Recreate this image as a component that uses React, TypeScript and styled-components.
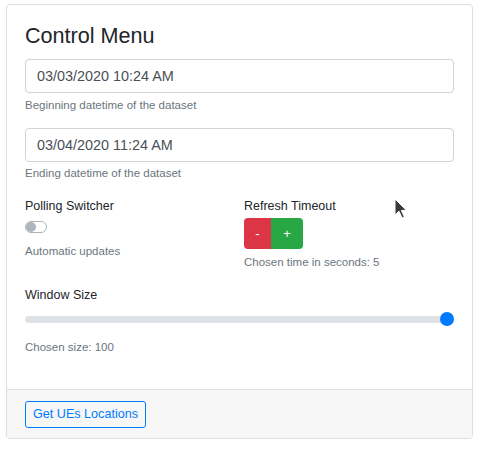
import React from "react";
import styled, { createGlobalStyle } from "styled-components";

const GlobalStyle = createGlobalStyle`
  html, body { margin: 0; padding: 0; background: #fff; }
  body {
    font-family: "Liberation Sans", Arial, sans-serif;
    color: #212529;
  }
  * { box-sizing: border-box; }
`;

const Page = styled.div`
  position: relative;
  width: 480px;
  height: 473px;
  padding: 4px 7px 0 6px;
`;

const Card = styled.div`
  border: 1px solid #dfdfdf;
  border-radius: 4px;
  overflow: hidden;
  background: #fff;
`;

const Body = styled.div`
  padding: 18px 18px 18px 18px;
`;

const Title = styled.h3`
  margin: 0 0 10px;
  font-size: 21.6px;
  font-weight: 400;
  line-height: 1.2;
`;

const Group = styled.div`
  margin-bottom: 14px;
`;

const Input = styled.input`
  display: block;
  width: 100%;
  height: 34px;
  margin: 0;
  padding: 0 11px;
  font-family: inherit;
  font-size: 14.4px;
  color: #495057;
  background: #fff;
  border: 1px solid #ced4da;
  border-radius: 4px;
  outline: none;
`;

const Help = styled.small<{ $top?: number }>`
  display: block;
  margin-top: ${(p) => p.$top ?? 3.6}px;
  font-size: 11.5px;
  line-height: 17.3px;
  color: #6c757d;
`;

const Row = styled.div`
  display: grid;
  grid-template-columns: 211px 1fr;
  column-gap: 8px;
  margin-bottom: 14px;
`;

const Label = styled.div<{ $bottom?: number }>`
  font-size: 12.5px;
  line-height: 18.75px;
  margin-bottom: ${(p) => p.$bottom ?? 0}px;
`;

const Switch = styled.div`
  position: relative;
  width: 22px;
  height: 12px;
  border: 1px solid #adb5bd;
  border-radius: 6px;
  background: #fff;
  &::after {
    content: "";
    position: absolute;
    top: 0px;
    left: 0px;
    width: 10px;
    height: 10px;
    border-radius: 50%;
    background: #adb5bd;
  }
`;

const BtnGroup = styled.div`
  display: inline-flex;
  border-radius: 4px;
  overflow: hidden;
`;

const StepBtn = styled.button<{ $color: string; $w: number }>`
  width: ${(p) => p.$w}px;
  height: 31px;
  margin: 0;
  padding: 0;
  border: none;
  background: ${(p) => p.$color};
  color: #fff;
  font-family: inherit;
  font-size: 13px;
  line-height: 1;
  cursor: pointer;
`;

const SliderWrap = styled.div`
  position: relative;
  height: 14px;
  margin-top: 8px;
  display: flex;
  align-items: center;
`;

const Track = styled.div`
  width: 100%;
  height: 7px;
  border-radius: 4px;
  background: #dee2e6;
`;

const Thumb = styled.div`
  position: absolute;
  top: 0;
  width: 14px;
  height: 14px;
  border-radius: 50%;
  background: #007bff;
`;

const Footer = styled.div`
  border-top: 1px solid #dfdfdf;
  background: #f7f7f7;
  padding: 11px 18px 10px;
`;

const OutlineBtn = styled.button`
  display: block;
  height: 27px;
  margin: 0;
  padding: 0 7px;
  border: 1px solid #007bff;
  border-radius: 3px;
  background: transparent;
  color: #007bff;
  font-family: inherit;
  font-size: 12.6px;
  cursor: pointer;
`;

const Cursor = styled.svg`
  position: absolute;
  left: 394px;
  top: 198px;
`;

export default function App() {
  const size = 100;
  const max = 100;
  const pct = size / max;
  return (
    <Page>
      <GlobalStyle />
      <Card>
        <Body>
          <Title>Control Menu</Title>
          <Group>
            <Input readOnly value="03/03/2020 10:24 AM" />
            <Help>Beginning datetime of the dataset</Help>
          </Group>
          <Group>
            <Input readOnly value="03/04/2020 11:24 AM" />
            <Help>Ending datetime of the dataset</Help>
          </Group>
          <Row>
            <div>
              <Label $bottom={6}>Polling Switcher</Label>
              <Switch />
              <Help $top={10}>Automatic updates</Help>
            </div>
            <div>
              <Label $bottom={3}>Refresh Timeout</Label>
              <BtnGroup>
                <StepBtn $color="#dc3545" $w={27}>-</StepBtn>
                <StepBtn $color="#28a745" $w={32}>+</StepBtn>
              </BtnGroup>
              <Help $top={5}>Chosen time in seconds: 5</Help>
            </div>
          </Row>
          <Group>
            <Label>Window Size</Label>
            <SliderWrap>
              <Track />
              <Thumb style={{ left: `calc(${pct * 100}% - ${pct * 14}px)` }} />
            </SliderWrap>
            <Help $top={13}>Chosen size: 100</Help>
          </Group>
        </Body>
        <Footer>
          <OutlineBtn>Get UEs Locations</OutlineBtn>
        </Footer>
      </Card>
      <Cursor width="14" height="22" viewBox="0 0 14 22">
        <path
          d="M1 1 L1 17 L5 13.2 L8 20 L10.3 19 L7.4 12.4 L12.5 12.4 Z"
          fill="#3a3a3a"
          stroke="#ffffff"
          strokeWidth="1"
          strokeLinejoin="round"
        />
      </Cursor>
    </Page>
  );
}
